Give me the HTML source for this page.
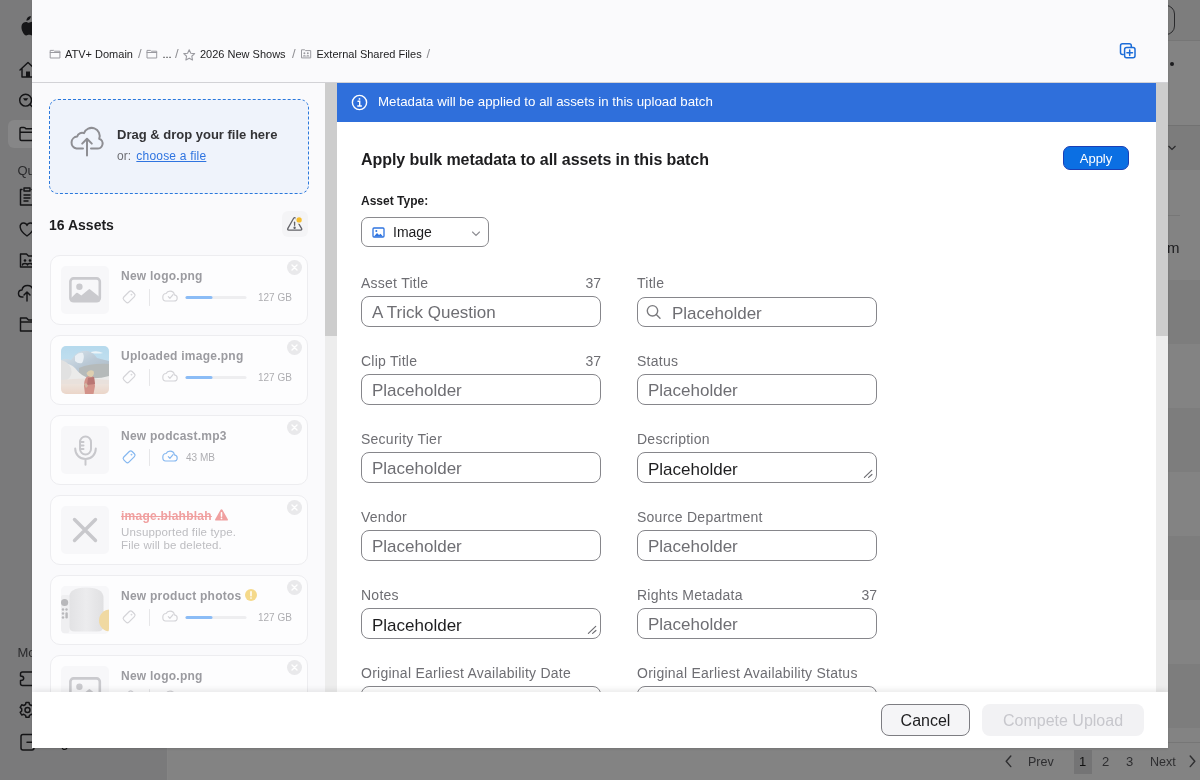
<!DOCTYPE html>
<html><head><meta charset="utf-8">
<style>
*{box-sizing:border-box;margin:0;padding:0}
html,body{width:1200px;height:780px;overflow:hidden;-webkit-font-smoothing:antialiased;font-family:"Liberation Sans",sans-serif;background:#838383;position:relative}
.abs{position:absolute}
/* backdrop app */
#side{left:0;top:0;width:168px;height:780px;background:#7a7a7b;border-right:1px solid #858585}
#modal{left:32px;top:0;width:1136px;height:748px;background:#fafafc;overflow:hidden;box-shadow:0 1px 2px rgba(0,0,0,.12)}
#root{position:absolute;left:0;top:0;width:1200px;height:780px;overflow:hidden;background:#838383;will-change:transform}
#hdr{left:0;top:0;width:1136px;height:83px;border-bottom:1px solid #d2d2d6;background:#fafafc}
.bc{position:absolute;top:47px;font-size:11px;color:#1d1d1f;white-space:nowrap;line-height:14px}
.sl{color:#8e8e93}
#left{left:0;top:83px;width:293px;height:609px;background:#fafafc}
#lsb{left:293px;top:83px;width:12px;height:609px;background:#ededed}
#lsb i,#rsb i{position:absolute;left:0;top:0;width:12px;height:253px;background:#cdcdcd}
#right{left:305px;top:83px;width:819px;height:609px;background:#fff}
#rsb{left:1124px;top:83px;width:12px;height:609px;background:#ededed}
#banner{left:0;top:0;width:819px;height:39px;background:#2f6fdb;color:#fff;font-size:13.3px;line-height:39px}
#footer{left:0;top:692px;width:1136px;height:56px;background:#fff;box-shadow:0 -2px 6px rgba(0,0,0,0.09)}
.lbl{position:absolute;font-size:14px;color:#6e6e73;line-height:16px;white-space:nowrap;letter-spacing:.25px}
.cnt{position:absolute;font-size:14px;color:#6e6e73;line-height:16px;text-align:right}
.inp{position:absolute;width:240px;height:31px;border:1px solid #86868b;border-radius:8px;background:#fff;font-size:17px;color:#6e6e73;line-height:29px;padding-top:1px;padding-left:10px;white-space:nowrap}
.ta{color:#1d1d1f;padding-top:2px}
.card{position:absolute;left:18px;width:258px;height:70px;background:#fdfdfe;border:1px solid #ededf0;border-radius:10px}
.thumb{position:absolute;left:10px;top:10px;width:48px;height:48px;background:#f7f7f9;border-radius:5px;overflow:hidden}
.nm{position:absolute;left:70px;top:13px;font-size:12px;font-weight:700;color:#9b9ba0;white-space:nowrap;line-height:14px;letter-spacing:.25px}
.x{position:absolute;left:236px;top:4px;width:15px;height:15px;border-radius:50%;background:#e9e9eb}
.meta{position:absolute;left:70px;top:35px;height:16px;width:180px}
.sz{position:absolute;font-size:10px;color:#aeaeb2;line-height:12px;white-space:nowrap}
</style></head><body><div id="root">
<div id="side" class="abs">
  <div class="abs" style="left:8px;top:120px;width:152px;height:28px;border-radius:6px;background:#868687"></div>
  <svg class="abs" style="left:0;top:0" width="168" height="780" viewBox="0 0 168 780" fill="none" stroke="#141416" stroke-width="1.45" stroke-linecap="round" stroke-linejoin="round">
    <!-- apple logo -->
    <g transform="translate(19.3,15.3) scale(0.7)" fill="#161618" stroke="none">
    <path d="M14.8 5.8c1.1-1.4 1.8-3.1 1.6-4.8-1.6.1-3.4 1-4.5 2.3-1 1.1-1.8 2.8-1.6 4.5 1.7.1 3.4-.8 4.5-2z"/>
    <path d="M20.5 16.8c0-3.3 2.7-4.8 2.8-4.9-1.5-2.2-3.9-2.5-4.7-2.6-2-.2-3.9 1.2-4.9 1.2s-2.6-1.2-4.2-1.1c-2.2 0-4.2 1.3-5.3 3.200-2.3 3.900-.6 9.700 1.6 12.900 1.100 1.600 2.400 3.300 4.100 3.200 1.600-.1 2.300-1 4.200-1s2.500 1 4.200 1c1.800 0 2.900-1.600 4-3.200 1.200-1.800 1.700-3.500 1.800-3.600-.1 0-3.500-1.300-3.600-5.200z"/>
    </g>
    <!-- home -->
    <path d="M20 70 L28 62.5 L36 70 M22 68.5 V77 H34 V68.5"/>
    <rect x="26" y="71.5" width="4" height="5.5" fill="#141416" stroke="none"/>
    <!-- search -->
    <circle cx="25.6" cy="100.2" r="5.9"/><path d="M29.9 104.5 L32 106.6"/>
    <path d="M23 98.3 h5.2 l-1.6 2.2 h-2z M24.2 101.6 h2.8" fill="#141416" stroke="none"/>
    <!-- folder selected -->
    <path d="M20 139 V128.8 Q20 127.4 21.4 127.4 H23.8 Q24.6 127.4 25.2 128 L25.9 128.8 H40 M20 132.2 H40 M20 139 Q20 140.5 21.5 140.5 H40"/>
    <!-- clipboard -->
    <path d="M22 189.5 h-1.5 v15.5 h13 v-15.5 h-1.5 M24 188 h6 v3 h-6z M24 195 h6 M24 198 h6 M24 201 h4"/>
    <!-- heart -->
    <path d="M27 236 C18 230 19 223 23.5 223 C25.5 223 27 224.5 27 225.5 C27 224.5 28.5 223 30.5 223 C35 223 36 230 27 236z"/>
    <!-- people folder -->
    <path d="M20.5 254 h6 l2 2 h10 v11 h-18z"/>
    <circle cx="25" cy="260.5" r="1.3" fill="#141416" stroke="none"/><circle cx="30" cy="260.5" r="1.3" fill="#141416" stroke="none"/>
    <path d="M22.5 265 c0-2 5-2 5 0 M27.5 265 c0-2 5-2 5 0"/>
    <!-- cloud upload -->
    <path d="M23 297 h-1 c-2.5 0-3.5-2-3.5-3.5 0-2 1.5-3.5 3.5-3.5 .5-3 3-4.5 5.5-4.5 3 0 5 2 5.5 4.5 M27 301 v-9 M24 295 l3-3 3 3"/>
    <!-- folder -->
    <path d="M20.5 318 h6 l2 2 h10 v11 h-18z M20.5 322 h18"/>
    <!-- puzzle -->
    <path d="M22.5 672 h10.5 a2 2 0 0 1 2 2 v9.5 a2 2 0 0 1-2 2 h-10.5 a2 2 0 0 1-2-2 v-3 c2.2 0 3.2-1 3.2-2.3s-1-2.3-3.2-2.3 v-1.9 a2 2 0 0 1 2-2z"/>
    <!-- gear -->
    <circle cx="27.5" cy="710" r="2.5"/>
    <path d="M26 702.5 h3 l.5 2 1.8 1 2-.7 1.5 2.6-1.5 1.4 v2.2 l1.5 1.4-1.5 2.6-2-.7-1.8 1-.5 2 h-3 l-.5-2-1.8-1-2 .7-1.5-2.6 1.5-1.4 v-2.2 l-1.5-1.4 1.5-2.6 2 .7 1.8-1z"/>
    <!-- logout -->
    <path d="M34 739.5 v-3 a2 2 0 0 0-2-2 h-9 a2 2 0 0 0-2 2 v11.5 a2 2 0 0 0 2 2 h9 a2 2 0 0 0 2-2 v-3 M27 742.3 h10"/>
  </svg>
  <div class="abs" style="left:17.5px;top:162.5px;font-size:13px;line-height:16px;color:#2a2a2c">Quick Links</div>
  <div class="abs" style="left:17.5px;top:644.5px;font-size:13px;line-height:16px;color:#2a2a2c">More</div>
  <div class="abs" style="left:45.2px;top:733.5px;font-size:14px;line-height:16px;color:#111">Log out</div>
</div>
<!-- right backdrop content -->
<div class="abs" style="left:168px;top:0;width:1032px;height:41px;background:#7d7d7d;border-bottom:1px solid #767676"></div>
<div class="abs" style="left:1110px;top:5px;width:65px;height:30px;border:1.3px solid #2a2a2c;border-radius:9px"></div>
<div class="abs" style="left:1170px;top:62px;width:4px;height:4px;border-radius:50%;background:#1c1c1e"></div>
<div class="abs" style="left:168px;top:125px;width:1032px;height:45px;background:#7c7c7c;border-top:1px solid #727272"></div>
<svg class="abs" style="left:1160px;top:141px" width="20" height="14"><path d="M8.5 5 L12 8.5 L15.5 5" fill="none" stroke="#2a2a2c" stroke-width="1.2"/></svg>
<div class="abs" style="left:1168px;top:215px;width:12px;height:1px;background:#777"></div>
<div class="abs" style="left:1167px;top:239px;font-size:15px;line-height:18px;color:#1c1c1e">m</div>
<div class="abs" style="left:168px;top:280px;width:1032px;height:64px;background:#7d7d7d"></div>
<div class="abs" style="left:168px;top:408px;width:1032px;height:64px;background:#7d7d7d"></div>
<div class="abs" style="left:168px;top:536px;width:1032px;height:64px;background:#7d7d7d"></div>
<div class="abs" style="left:168px;top:664px;width:1032px;height:64px;background:#7d7d7d"></div>
<div class="abs" style="left:168px;top:742px;width:1032px;height:1px;background:#767676"></div>
<svg class="abs" style="left:1000px;top:750px" width="200" height="24" fill="none" stroke="#2e2e30" stroke-width="1.4" stroke-linecap="round" stroke-linejoin="round">
  <path d="M10.8 6 L6.2 11.3 L10.8 16.6"/>
  <path d="M190.2 6 L194.8 11.3 L190.2 16.6"/>
</svg>
<div class="abs" style="left:1074px;top:750px;width:18px;height:24px;background:#747475"></div>
<div class="abs" style="left:1028px;top:754px;font-size:12.5px;line-height:16px;color:#2e2e30">Prev</div>
<div class="abs" style="left:1079px;top:754px;font-size:13px;line-height:16px;color:#111">1</div>
<div class="abs" style="left:1102px;top:754px;font-size:13px;line-height:16px;color:#2e2e30">2</div>
<div class="abs" style="left:1126px;top:754px;font-size:13px;line-height:16px;color:#2e2e30">3</div>
<div class="abs" style="left:1150px;top:754px;font-size:12.5px;line-height:16px;color:#2e2e30">Next</div>
<div id="modal" class="abs">
<div id="hdr" class="abs">
  <svg class="abs" style="left:0;top:0" width="1136" height="82" fill="none" stroke-linecap="round" stroke-linejoin="round">
    <g stroke="#9a9aa0" stroke-width="1">
      <path d="M18.2 57.6 V50.4 H21.6 L22.5 51.2 H27.9 V57.6z M18.2 52.5 H27.9"/>
      <path d="M115 57.6 V50.4 H118.4 L119.3 51.2 H124.7 V57.6z M115 52.5 H124.7"/>
      <path d="M157.20 49.70 L158.82 53.18 L162.62 53.64 L159.82 56.25 L160.55 60.01 L157.20 58.15 L153.85 60.01 L154.58 56.25 L151.78 53.64 L155.58 53.18z" stroke-width="1.1"/>
      <path d="M269.5 57.5 V49.8 H272.6 L273.5 50.6 H278.7 V57.5z"/>
    </g>
    <g fill="#9a9aa0"><circle cx="272.4" cy="53.2" r=".95"/><circle cx="275.8" cy="53.2" r=".95"/><path d="M270.8 56.4 c0-1.5 3.2-1.5 3.2 0z M274.2 56.4 c0-1.5 3.2-1.5 3.2 0z"/></g>
    <g stroke="#1b6cd8" stroke-width="1.5">
      <path d="M1091.2 54.5 h-0.7 a2 2 0 0 1-2-2 v-6.8 a2 2 0 0 1 2-2 h6.8 a2 2 0 0 1 2 2 v1.2"/>
      <rect x="1092.6" y="47.4" width="10.4" height="10.4" rx="2"/>
      <path d="M1097.7 49.9 v5.6 M1094.9 52.7 h5.6"/>
    </g>
  </svg>
  <div class="bc" style="left:33px">ATV+ Domain</div>
  <div class="bc sl" style="left:106px;top:46px;font-size:13px;line-height:16px">/</div>
  <div class="bc" style="left:130.5px">...</div>
  <div class="bc sl" style="left:143px;top:46px;font-size:13px;line-height:16px">/</div>
  <div class="bc" style="left:168px">2026 New Shows</div>
  <div class="bc sl" style="left:260px;top:46px;font-size:13px;line-height:16px">/</div>
  <div class="bc" style="left:284.5px">External Shared Files</div>
  <div class="bc sl" style="left:394.5px;top:46px;font-size:13px;line-height:16px">/</div>
</div>
<div id="left" class="abs">
  <div class="abs" style="left:17px;top:16px;width:260px;height:95px;background:#eff3fb;border:1.3px dashed #2a78dc;border-radius:9px"></div>
  <svg class="abs" style="left:36px;top:42px" width="38" height="34" fill="none" stroke="#8e8e93" stroke-width="2" stroke-linecap="round" stroke-linejoin="round">
    <path d="M15 23.5 H8.5 A6 6 0 0 1 9.2 11.6 A5 5 0 0 1 16 8.2 A8 8 0 0 1 31.2 13.8 A5 5 0 0 1 29 23.5 H23"/>
    <path d="M19 30.5 V13.8 M14.2 18.6 L19 13.8 L23.8 18.6"/>
  </svg>
  <div class="abs" style="left:85px;top:44px;font-size:13px;font-weight:700;line-height:16px;color:#333336;white-space:nowrap">Drag &amp; drop your file here</div>
  <div class="abs" style="left:85px;top:65px;font-size:12px;line-height:16px;color:#6e6e73;white-space:nowrap">or: <span style="color:#2f74e0;text-decoration:underline;margin-left:2px;letter-spacing:.2px">choose a file</span></div>
  <div class="abs" style="left:17px;top:133px;font-size:14px;font-weight:700;line-height:18px;color:#1d1d1f;white-space:nowrap">16 Assets</div>
  <div class="abs" style="left:250px;top:128px;width:26px;height:26px;background:#f4f4f6;border-radius:6px"></div>
  <svg class="abs" style="left:250px;top:128px" width="26" height="26" fill="none" stroke="#636368" stroke-width="1.3" stroke-linejoin="round" stroke-linecap="round">
    <path d="M11.5 7.5 Q12.6 5.9 13.7 7.5 L19.5 17.4 Q20.3 19.1 18.6 19.1 H6.8 Q5.1 19.1 5.9 17.4 Z"/>
    <path d="M12.6 11.2 V14.3"/><circle cx="12.6" cy="16.7" r=".55" fill="#636368"/>
    <circle cx="17.1" cy="8.9" r="3.3" fill="#f5bd2e" stroke="#f4f4f6" stroke-width="1.3"/>
  </svg>

  <div class="card" style="top:172px">
    <div class="thumb"><svg width="48" height="48" fill="none"><rect x="9.4" y="12.4" width="29.4" height="22.9" rx="3.2" stroke="#cacace" stroke-width="2.6"/><circle cx="18.4" cy="20.8" r="3.2" fill="#cacace"/><path d="M9.6 32.5 L15.2 27 Q16 26.4 16.8 27 L20.3 29.6 L27.6 23.4 Q28.4 22.8 29.2 23.4 L38.6 31 V35.4 H9.6z" fill="#cacace"/></svg></div>
    <div class="nm">New logo.png</div>
    <div class="x"><svg width="15" height="15"><path d="M5 5 L10 10 M10 5 L5 10" stroke="#fff" stroke-width="1.4" stroke-linecap="round"/></svg></div>
    <svg class="abs" style="left:69px;top:31px" width="185" height="20" fill="none" stroke-linecap="round" stroke-linejoin="round">
      <g stroke="#d4d4d8" stroke-width="1.2">
        <rect x="-5.9" y="-3.6" width="11.8" height="7.2" rx="2" transform="translate(9.1,9.8) rotate(-45)"/>
        <circle cx="11.5" cy="7.6" r=".35" stroke-width="1.1"/>
      </g>
      <path d="M29.5 2.5 V18.5" stroke="#e6e6e8" stroke-width="1"/>
      <g stroke="#d4d4d8" stroke-width="1.2">
        <path d="M45.6 14 H54 C55.8 14 57.2 12.6 57.2 10.9 C57.2 9.3 56 8 54.4 7.8 C54 5.6 52.2 4.1 50 4.1 C48.3 4.1 46.8 5 46.1 6.5 C44.2 6.6 42.8 8.2 42.8 10.2 C42.8 12.3 44.1 14 45.6 14z"/>
        <path d="M48.3 9.6 L49.9 11.3 L53 7.6"/>
      </g>
      <rect x="65.5" y="9" width="61" height="3" rx="1.5" fill="#eeeef0" stroke="none"/>
      <rect x="65.5" y="9" width="27" height="3" rx="1.5" fill="#8bbcf6" stroke="none"/>
    </svg>
    <div class="sz" style="left:207px;top:36px">127 GB</div>
  </div>
  <div class="card" style="top:252px">
    <div class="thumb"><svg width="48" height="48">
  <defs>
    <linearGradient id="sky" x1="0" y1="0" x2="0" y2="1"><stop offset="0" stop-color="#a4d2ea"/><stop offset="1" stop-color="#cfe6f0"/></linearGradient>
    <linearGradient id="fld" x1="0" y1="0" x2="0" y2="1"><stop offset="0" stop-color="#ece3dc"/><stop offset="1" stop-color="#e8cdbb"/></linearGradient>
    <linearGradient id="dome" x1="0" y1="0" x2="1" y2="1"><stop offset="0" stop-color="#d5e2ea"/><stop offset=".5" stop-color="#a9bccb"/><stop offset="1" stop-color="#98a8b4"/></linearGradient>
    <filter id="bl"><feGaussianBlur stdDeviation="0.6"/></filter>
  </defs>
  <g opacity=".78"><rect width="48" height="48" fill="url(#sky)"/>
  <g filter="url(#bl)">
  <path d="M30 6 Q36 4 42 7 Q38 8 30 7z" fill="#eaf4f8"/>
  <path d="M0 14 Q5 12 10 14 L14 9 Q20 4 27 5 Q33 7 36 12 L48 15 V32 H0z" fill="url(#dome)"/>
  <path d="M14 10 Q18 6 22 7 Q24 12 21 17 Q17 18 14 15z" fill="#e6eef2"/>
  <path d="M18 22 Q30 17 48 18 V34 H18z" fill="#a3aaa8"/>
  <path d="M0 18 Q8 16 14 22 Q20 30 28 32 Q38 33 48 30 V38 H0z" fill="#e8e8e6"/>
  <path d="M0 14 Q6 15 10 22 Q12 30 6 34 H0z" fill="#dcdcda"/>
  <rect x="0" y="35" width="48" height="13" fill="url(#fld)"/>
  <path d="M0 34 Q24 31 48 34 V38 H0z" fill="#e6dcd4"/>
  <path d="M25.5 31 Q29 29 33 31 L34 40 L32.5 48 H24 L23 40 Q23 34 25.5 31z" fill="#c9776b"/>
  <path d="M27 32 L33 31 L34 38 L26 39z" fill="#a8524e"/>
  <path d="M25.5 27 Q28.5 23 32.5 25 Q34 28.5 30.5 31 Q26.5 31 25.5 27z" fill="#d8c59c"/>
  <path d="M23 38 Q26 36 27 40 L25 42z" fill="#caa58a"/>
  </g></g>
</svg></div>
    <div class="nm">Uploaded image.png</div>
    <div class="x"><svg width="15" height="15"><path d="M5 5 L10 10 M10 5 L5 10" stroke="#fff" stroke-width="1.4" stroke-linecap="round"/></svg></div>
    <svg class="abs" style="left:69px;top:31px" width="185" height="20" fill="none" stroke-linecap="round" stroke-linejoin="round">
      <g stroke="#d4d4d8" stroke-width="1.2">
        <rect x="-5.9" y="-3.6" width="11.8" height="7.2" rx="2" transform="translate(9.1,9.8) rotate(-45)"/>
        <circle cx="11.5" cy="7.6" r=".35" stroke-width="1.1"/>
      </g>
      <path d="M29.5 2.5 V18.5" stroke="#e6e6e8" stroke-width="1"/>
      <g stroke="#d4d4d8" stroke-width="1.2">
        <path d="M45.6 14 H54 C55.8 14 57.2 12.6 57.2 10.9 C57.2 9.3 56 8 54.4 7.8 C54 5.6 52.2 4.1 50 4.1 C48.3 4.1 46.8 5 46.1 6.5 C44.2 6.6 42.8 8.2 42.8 10.2 C42.8 12.3 44.1 14 45.6 14z"/>
        <path d="M48.3 9.6 L49.9 11.3 L53 7.6"/>
      </g>
      <rect x="65.5" y="9" width="61" height="3" rx="1.5" fill="#eeeef0" stroke="none"/>
      <rect x="65.5" y="9" width="27" height="3" rx="1.5" fill="#8bbcf6" stroke="none"/>
    </svg>
    <div class="sz" style="left:207px;top:36px">127 GB</div>
  </div>
  <div class="card" style="top:332px">
    <div class="thumb"><svg width="48" height="48" fill="none" stroke="#c8c8cc" stroke-width="2" stroke-linecap="round"><rect x="19" y="10.5" width="11" height="18" rx="5.5"/><path d="M14.2 22.5 C14.2 28.5 18.5 33 24.5 33 C30.5 33 34.8 28.5 34.8 22.5 M24.5 33 V38.8 M19.5 16 H22.5 M19.5 19.5 H22.5 M19.5 23 H22.5"/></svg></div>
    <div class="nm">New podcast.mp3</div>
    <div class="x"><svg width="15" height="15"><path d="M5 5 L10 10 M10 5 L5 10" stroke="#fff" stroke-width="1.4" stroke-linecap="round"/></svg></div>
    <svg class="abs" style="left:69px;top:31px" width="185" height="20" fill="none" stroke-linecap="round" stroke-linejoin="round">
      <g stroke="#86b8f0" stroke-width="1.2">
        <rect x="-5.9" y="-3.6" width="11.8" height="7.2" rx="2" transform="translate(9.1,9.8) rotate(-45)"/>
        <circle cx="11.5" cy="7.6" r=".35" stroke-width="1.1"/>
      </g>
      <path d="M29.5 2.5 V18.5" stroke="#e6e6e8" stroke-width="1"/>
      <g stroke="#86b8f0" stroke-width="1.2">
        <path d="M45.6 14 H54 C55.8 14 57.2 12.6 57.2 10.9 C57.2 9.3 56 8 54.4 7.8 C54 5.6 52.2 4.1 50 4.1 C48.3 4.1 46.8 5 46.1 6.5 C44.2 6.6 42.8 8.2 42.8 10.2 C42.8 12.3 44.1 14 45.6 14z"/>
        <path d="M48.3 9.6 L49.9 11.3 L53 7.6"/>
      </g>
    </svg>
    <div class="sz" style="left:135px;top:36px">43 MB</div>
  </div>
  <div class="card" style="top:412px">
    <div class="thumb"><svg width="48" height="48"><path d="M13.5 13.5 L34.5 34.5 M34.5 13.5 L13.5 34.5" stroke="#c8c8cc" stroke-width="3.4" stroke-linecap="round"/></svg></div>
    <div class="nm"><span style="color:#f0a0a0;text-decoration:line-through">image.blahblah</span></div>
    <div class="x"><svg width="15" height="15"><path d="M5 5 L10 10 M10 5 L5 10" stroke="#fff" stroke-width="1.4" stroke-linecap="round"/></svg></div>
    <svg class="abs" style="left:163px;top:12px" width="16" height="14"><path d="M6.6 1.8 L1.2 11.3 C.8 12 1.2 12.6 2 12.6 H13 C13.8 12.6 14.2 12 13.8 11.3 L8.4 1.8 C8 1.1 7 1.1 6.6 1.8z" fill="#f0a0a0"/><path d="M7.5 4.8 V8.3" stroke="#fff" stroke-width="1.5" stroke-linecap="round"/><circle cx="7.5" cy="10.4" r=".85" fill="#fff"/></svg>
    <div class="abs" style="left:70px;top:30px;font-size:11.5px;line-height:13px;color:#bdbdc1;white-space:nowrap;letter-spacing:.15px">Unsupported file type.<br>File will be deleted.</div>
  </div>
  <div class="card" style="top:492px">
    <div class="thumb"><svg width="48" height="48">
  <defs><filter id="bl2"><feGaussianBlur stdDeviation="0.6"/></filter>
  <linearGradient id="hp" x1="0" y1="0" x2="1" y2="0"><stop offset="0" stop-color="#e2e2e4"/><stop offset=".5" stop-color="#ececee"/><stop offset="1" stop-color="#e0e0e2"/></linearGradient></defs>
  <rect width="48" height="48" fill="#f7f7f9"/>
  <g filter="url(#bl2)">
  <path d="M8 12 Q8 1.5 25 1.5 Q42.5 1.5 42.5 12 V40 Q42.5 45.5 36 45.5 H14 Q8 45.5 8 40z" fill="url(#hp)"/>
  <rect x="0" y="9" width="8.5" height="38" rx="2" fill="#efeff1"/>
  <circle cx="3.6" cy="16.5" r="3.6" fill="#b8b8bb"/>
  <circle cx="2" cy="23.5" r="1.2" fill="#b8b8bb"/><circle cx="5.5" cy="23.5" r="1.2" fill="#b8b8bb"/>
  <circle cx="2" cy="27.5" r="1.2" fill="#b8b8bb"/><rect x="4.4" y="26.3" width="2.4" height="6.2" rx="1.2" fill="#b8b8bb"/>
  <circle cx="2" cy="31.5" r="1.2" fill="#b8b8bb"/>
  <circle cx="49" cy="34.5" r="11" fill="#f0d9a2"/>
  </g>
</svg></div>
    <div class="nm">New product photos</div>
    <div class="x"><svg width="15" height="15"><path d="M5 5 L10 10 M10 5 L5 10" stroke="#fff" stroke-width="1.4" stroke-linecap="round"/></svg></div>
    <svg class="abs" style="left:69px;top:31px" width="185" height="20" fill="none" stroke-linecap="round" stroke-linejoin="round">
      <g stroke="#d4d4d8" stroke-width="1.2">
        <rect x="-5.9" y="-3.6" width="11.8" height="7.2" rx="2" transform="translate(9.1,9.8) rotate(-45)"/>
        <circle cx="11.5" cy="7.6" r=".35" stroke-width="1.1"/>
      </g>
      <path d="M29.5 2.5 V18.5" stroke="#e6e6e8" stroke-width="1"/>
      <g stroke="#d4d4d8" stroke-width="1.2">
        <path d="M45.6 14 H54 C55.8 14 57.2 12.6 57.2 10.9 C57.2 9.3 56 8 54.4 7.8 C54 5.6 52.2 4.1 50 4.1 C48.3 4.1 46.8 5 46.1 6.5 C44.2 6.6 42.8 8.2 42.8 10.2 C42.8 12.3 44.1 14 45.6 14z"/>
        <path d="M48.3 9.6 L49.9 11.3 L53 7.6"/>
      </g>
      <rect x="65.5" y="9" width="61" height="3" rx="1.5" fill="#eeeef0" stroke="none"/>
      <rect x="65.5" y="9" width="27" height="3" rx="1.5" fill="#8bbcf6" stroke="none"/>
    </svg>
    <div class="sz" style="left:207px;top:36px">127 GB</div>
    <svg class="abs" style="left:193px;top:12px" width="14" height="14"><circle cx="7" cy="7" r="6" fill="#f5d98a"/><path d="M7 3.8 V7.8" stroke="#fff" stroke-width="1.5" stroke-linecap="round"/><circle cx="7" cy="10" r=".85" fill="#fff"/></svg>
  </div>
  <div class="card" style="top:572px">
    <div class="thumb"><svg width="48" height="48" fill="none"><rect x="9.4" y="12.4" width="29.4" height="22.9" rx="3.2" stroke="#cacace" stroke-width="2.6"/><circle cx="18.4" cy="20.8" r="3.2" fill="#cacace"/><path d="M9.6 32.5 L15.2 27 Q16 26.4 16.8 27 L20.3 29.6 L27.6 23.4 Q28.4 22.8 29.2 23.4 L38.6 31 V35.4 H9.6z" fill="#cacace"/></svg></div>
    <div class="nm">New logo.png</div>
    <div class="x"><svg width="15" height="15"><path d="M5 5 L10 10 M10 5 L5 10" stroke="#fff" stroke-width="1.4" stroke-linecap="round"/></svg></div>
    <svg class="abs" style="left:69px;top:31px" width="185" height="20" fill="none" stroke-linecap="round" stroke-linejoin="round">
      <g stroke="#d4d4d8" stroke-width="1.2">
        <rect x="-5.9" y="-3.6" width="11.8" height="7.2" rx="2" transform="translate(9.1,9.8) rotate(-45)"/>
        <circle cx="11.5" cy="7.6" r=".35" stroke-width="1.1"/>
      </g>
      <path d="M29.5 2.5 V18.5" stroke="#e6e6e8" stroke-width="1"/>
      <g stroke="#d4d4d8" stroke-width="1.2">
        <path d="M45.6 14 H54 C55.8 14 57.2 12.6 57.2 10.9 C57.2 9.3 56 8 54.4 7.8 C54 5.6 52.2 4.1 50 4.1 C48.3 4.1 46.8 5 46.1 6.5 C44.2 6.6 42.8 8.2 42.8 10.2 C42.8 12.3 44.1 14 45.6 14z"/>
        <path d="M48.3 9.6 L49.9 11.3 L53 7.6"/>
      </g>
      <rect x="65.5" y="9" width="61" height="3" rx="1.5" fill="#eeeef0" stroke="none"/>
      <rect x="65.5" y="9" width="27" height="3" rx="1.5" fill="#8bbcf6" stroke="none"/>
    </svg>
    <div class="sz" style="left:207px;top:36px">127 GB</div>
  </div>
</div>
<div id="lsb" class="abs"><i></i></div>
<div id="right" class="abs">
  <div id="banner" class="abs">
    <svg class="abs" style="left:12.5px;top:9.7px" width="19" height="19" fill="none" stroke="#fff" stroke-width="1.4"><circle cx="9.5" cy="9.5" r="7.1"/><path d="M8 8.3 h1.7 v4.6 M7.8 13 h3.6" stroke-linecap="round"/><circle cx="9.5" cy="5.9" r=".9" fill="#fff" stroke="none"/></svg>
    <span class="abs" style="left:41px;top:-1px;white-space:nowrap">Metadata will be applied to all assets in this upload batch</span>
  </div>
  <div class="abs" style="left:24px;top:67px;font-size:16px;font-weight:700;line-height:20px;color:#1d1d1f;white-space:nowrap;letter-spacing:-.07px">Apply bulk metadata to all assets in this batch</div>
  <div class="abs" style="left:726px;top:63px;width:66px;height:24px;background:#0b6fe3;border:1px solid #1b3fb5;border-radius:7px;color:#fff;font-size:13px;line-height:24px;text-align:center">Apply</div>
  <div class="abs" style="left:24px;top:111px;font-size:12px;font-weight:700;line-height:14px;color:#1d1d1f;white-space:nowrap">Asset Type:</div>
  <div class="abs" style="left:24px;top:134px;width:128px;height:30px;border:1px solid #8a8a8e;border-radius:7px;background:#fff">
    <svg class="abs" style="left:10px;top:9px" width="14" height="12"><rect x="1" y="1" width="11" height="9" rx="1" fill="none" stroke="#2f74e0" stroke-width="1.3"/><path d="M2 9.5 L5 6 L7 8 L8.5 6.8 L11 9.5z" fill="#2f74e0"/><circle cx="4.3" cy="4" r="1" fill="#2f74e0"/></svg>
    <div class="abs" style="left:31px;top:6px;font-size:14px;line-height:16px;color:#1d1d1f">Image</div>
    <svg class="abs" style="left:108px;top:11px" width="12" height="10"><path d="M2.5 3 L6 6.5 L9.5 3" fill="none" stroke="#8e8e93" stroke-width="1.1" stroke-linecap="round"/></svg>
  </div>
  <div class="lbl" style="left:24px;top:192px">Asset Title</div>
  <div class="cnt" style="left:164px;top:192px;width:100px">37</div>
  <div class="inp" style="left:24px;top:213px">A Trick Question</div>
  <div class="lbl" style="left:300px;top:192px">Title</div>
  <div class="inp" style="left:300px;top:214px;height:30px;padding-left:34px"><svg class="abs" style="left:7px;top:5px" width="18" height="18" fill="none" stroke="#7a7a7e" stroke-width="1.4" stroke-linecap="round"><circle cx="7.5" cy="7.8" r="5.2"/><path d="M11.3 11.6 L15 15.3"/></svg>Placeholder</div>
  <div class="lbl" style="left:24px;top:270px">Clip Title</div>
  <div class="cnt" style="left:164px;top:270px;width:100px">37</div>
  <div class="inp" style="left:24px;top:291px">Placeholder</div>
  <div class="lbl" style="left:300px;top:270px">Status</div>
  <div class="inp" style="left:300px;top:291px">Placeholder</div>
  <div class="lbl" style="left:24px;top:348px">Security Tier</div>
  <div class="inp" style="left:24px;top:369px">Placeholder</div>
  <div class="lbl" style="left:300px;top:348px">Description</div>
  <div class="inp ta" style="left:300px;top:369px">Placeholder<svg class="abs" style="left:224px;top:15px" width="12" height="12"><path d="M2.4 9.4 L9.7 2.4 M6.6 9.4 L9.9 6.5" stroke="#6e6e73" stroke-width="1.2" stroke-linecap="round"/></svg></div>
  <div class="lbl" style="left:24px;top:426px">Vendor</div>
  <div class="inp" style="left:24px;top:447px">Placeholder</div>
  <div class="lbl" style="left:300px;top:426px">Source Department</div>
  <div class="inp" style="left:300px;top:447px">Placeholder</div>
  <div class="lbl" style="left:24px;top:504px">Notes</div>
  <div class="inp ta" style="left:24px;top:525px">Placeholder<svg class="abs" style="left:224px;top:15px" width="12" height="12"><path d="M2.4 9.4 L9.7 2.4 M6.6 9.4 L9.9 6.5" stroke="#6e6e73" stroke-width="1.2" stroke-linecap="round"/></svg></div>
  <div class="lbl" style="left:300px;top:504px">Rights Metadata</div>
  <div class="cnt" style="left:440px;top:504px;width:100px">37</div>
  <div class="inp" style="left:300px;top:525px">Placeholder</div>
  <div class="lbl" style="left:24px;top:582px">Original Earliest Availability Date</div>
  <div class="inp" style="left:24px;top:603px"></div>
  <div class="lbl" style="left:300px;top:582px">Original Earliest Availability Status</div>
  <div class="inp" style="left:300px;top:603px"></div>
</div>
<div id="rsb" class="abs"><i></i></div>
<div id="footer" class="abs">
  <div class="abs" style="left:849px;top:12px;width:89px;height:32px;border:1px solid #7d7d82;border-radius:8px;background:#f5f5f7;font-size:16px;line-height:32px;text-align:center;color:#1d1d1f">Cancel</div>
  <div class="abs" style="left:950px;top:12px;width:162px;height:32px;border-radius:8px;background:#f2f2f4;font-size:16px;line-height:34px;text-align:center;color:#c7c7cc">Compete Upload</div>
</div>
</div>
</div>
</body></html>
